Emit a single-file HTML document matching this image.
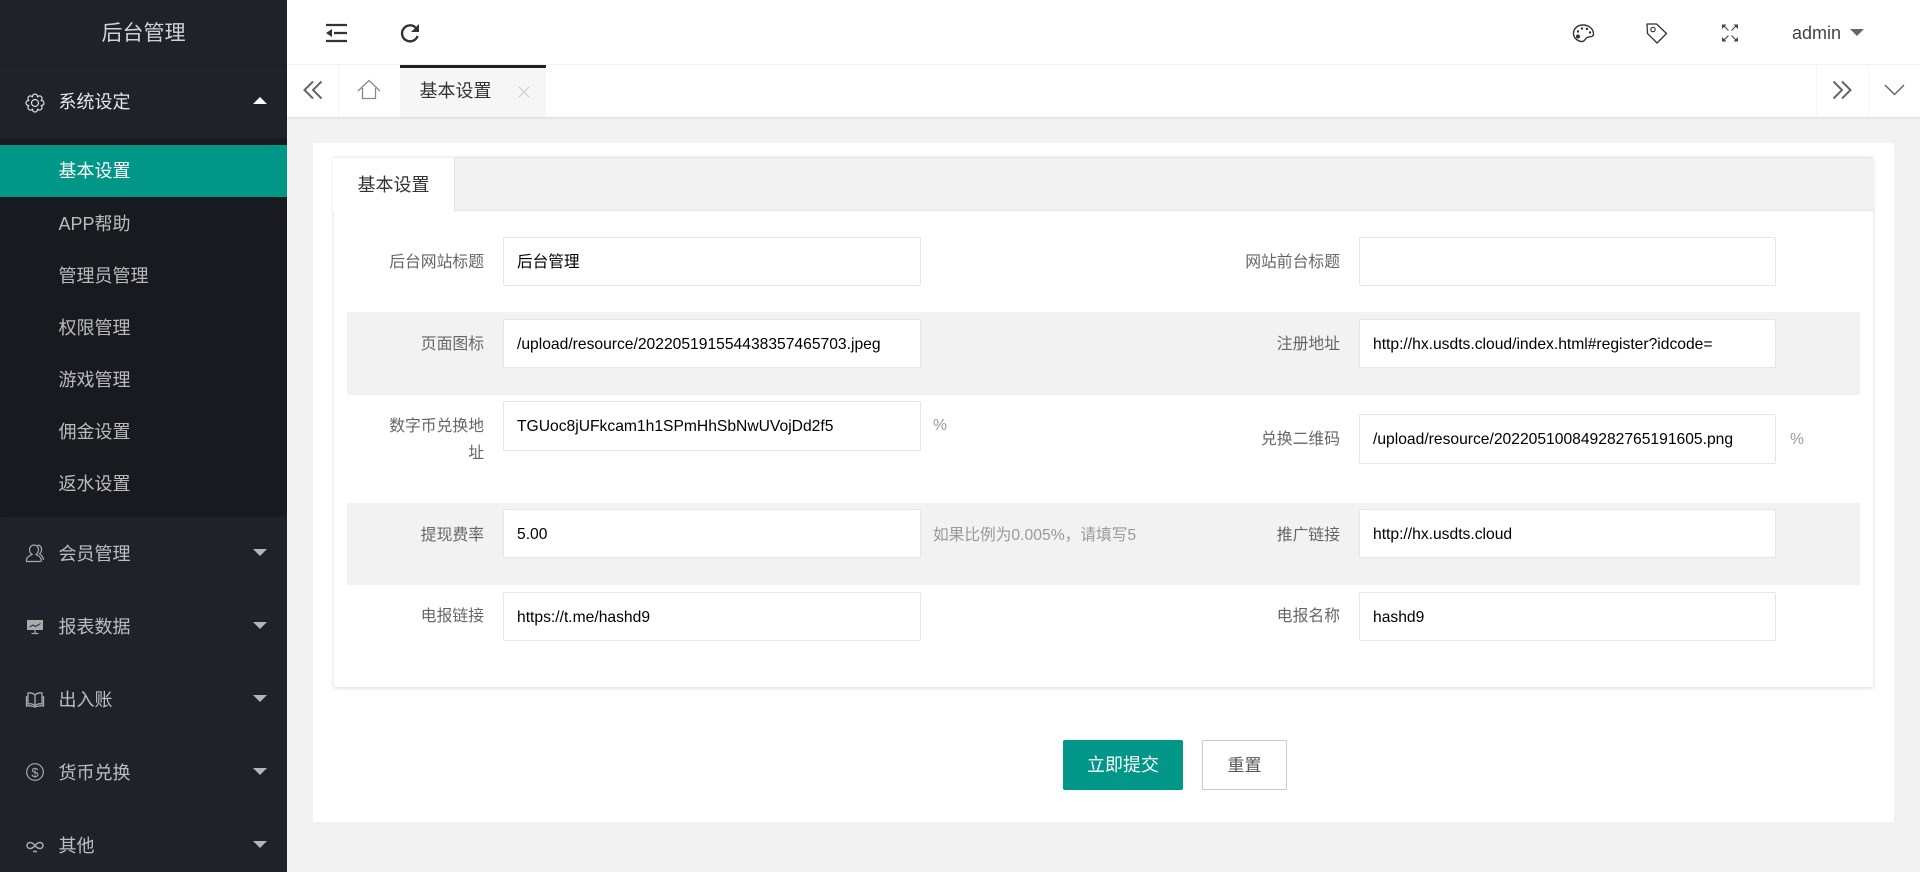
<!DOCTYPE html>
<html lang="zh-CN">
<head>
<meta charset="utf-8">
<title>后台管理</title>
<style>
*{box-sizing:border-box;margin:0;padding:0}
html,body{width:1920px;height:872px;overflow:hidden;background:#f2f2f2}
body{position:relative;font-family:"Liberation Sans","WenQuanYi Zen Hei","Noto Sans CJK SC",sans-serif;font-size:16px;color:#333}
.a{position:absolute;white-space:nowrap}
.side{position:absolute;left:0;top:0;width:287px;height:872px;background:#20222a;overflow:hidden}
.nav{position:absolute;left:58.5px;font-size:18px;line-height:30px;height:30px;color:rgba(255,255,255,.7);white-space:nowrap}
.lab{position:absolute;right:0;width:118px;text-align:right;font-size:15.8px;line-height:27px;color:#666}
.in{position:absolute;height:49px;line-height:49px;background:#fff;border:1px solid #e6e6e6;border-radius:2px;padding-left:13px;font-size:15.65px;color:#000;white-space:nowrap;overflow:hidden}
.band{position:absolute;left:347px;width:1513px;background:#f2f2f2}
.hint{position:absolute;font-size:15.7px;line-height:27px;color:#999;white-space:nowrap}
svg{position:absolute;left:0;top:0;overflow:visible}
</style>
</head>
<body>

<div class="side">
  <div class="a" style="left:0;top:0;width:287px;height:64px;line-height:67px;text-align:center;font-size:21px;color:rgba(255,255,255,.8);background:#20222a;box-shadow:0 1px 2px rgba(0,0,0,.1)">后台管理</div>
  <div class="nav" style="top:87px;color:#e8e8e9">系统设定</div>
  <div class="a" style="left:0;top:138px;width:287px;height:379px;background:#191a1f;border-radius:3px"></div>
  <div class="a" style="left:0;top:145px;width:287px;height:52px;background:#009688"></div>
  <div class="nav" style="top:156px;color:#fff">基本设置</div>
  <div class="nav" style="top:209px">APP帮助</div>
  <div class="nav" style="top:261px">管理员管理</div>
  <div class="nav" style="top:313px">权限管理</div>
  <div class="nav" style="top:365px">游戏管理</div>
  <div class="nav" style="top:417px">佣金设置</div>
  <div class="nav" style="top:469px">返水设置</div>
  <div class="nav" style="top:539px">会员管理</div>
  <div class="nav" style="top:612px">报表数据</div>
  <div class="nav" style="top:685px">出入账</div>
  <div class="nav" style="top:758px">货币兑换</div>
  <div class="nav" style="top:831px">其他</div>
</div>

<!-- header -->
<div class="a" style="left:287px;top:0;width:1633px;height:65px;background:#fff;border-bottom:1px solid #f6f6f6"></div>
<div class="a" style="left:1792px;top:18px;font-size:18px;line-height:30px;color:#444">admin</div>

<!-- tab bar -->
<div class="a" style="left:287px;top:65px;width:1633px;height:52px;background:#fff;box-shadow:0 1px 3px rgba(0,0,0,.1)"></div>
<div class="a" style="left:338px;top:65px;width:1px;height:52px;background:#f6f6f6"></div>
<div class="a" style="left:1816px;top:65px;width:1px;height:52px;background:#f6f6f6"></div>
<div class="a" style="left:1868px;top:65px;width:1px;height:52px;background:#f6f6f6"></div>
<div class="a" style="left:399.500px;top:65px;width:146px;height:52px;background:#f6f6f6;border-top:3px solid #20222a"></div>
<div class="a" style="left:419.500px;top:76px;font-size:18px;line-height:30px;color:#333">基本设置</div>

<!-- main card -->
<div class="a" style="left:313px;top:143px;width:1581px;height:679px;background:#fff;border-radius:2px"></div>
<div class="a" style="left:334px;top:157px;width:1539px;height:530px;background:#fff;border-radius:2px;box-shadow:0 1px 4px rgba(0,0,0,.16)"></div>
<div class="a" style="left:333px;top:157px;width:1540px;height:54px;background:#f2f2f2;border-bottom:1px solid #e6e6e6;border-top:1px solid #e6e6e6"></div>
<div class="a" style="left:333px;top:157px;width:122px;height:55px;background:#fff;border-right:1px solid #e6e6e6;border-top:1px solid #eee"></div>
<div class="a" style="left:357.500px;top:170px;font-size:18px;line-height:30px;color:#333">基本设置</div>

<div class="band" style="top:312px;height:83px"></div>
<div class="band" style="top:503px;height:82px"></div>

<!-- rows: left -->
<div class="lab" style="left:366px;top:248.500px">后台网站标题</div>
<div class="in" style="left:503px;top:237px;width:418px">后台管理</div>
<div class="lab" style="left:366px;top:330.500px">页面图标</div>
<div class="in" style="left:503px;top:319px;width:418px">/upload/resource/202205191554438357465703.jpeg</div>
<div class="lab" style="left:366px;top:412.500px;line-height:27px;white-space:normal;width:118px">数字币兑换地<br>址</div>
<div class="in" style="left:503px;top:401px;width:418px;height:50px">TGUoc8jUFkcam1h1SPmHhSbNwUVojDd2f5</div>
<div class="hint" style="left:933px;top:411.500px">%</div>
<div class="lab" style="left:366px;top:521.500px">提现费率</div>
<div class="in" style="left:503px;top:509px;width:418px;line-height:50px">5.00</div>
<div class="hint" style="left:933px;top:521.500px">如果比例为0.005%，请填写5</div>
<div class="lab" style="left:366px;top:603px">电报链接</div>
<div class="in" style="left:503px;top:592px;width:418px">https://t.me/hashd9</div>

<!-- rows: right -->
<div class="lab" style="left:1222px;top:248.500px;width:118px">网站前台标题</div>
<div class="in" style="left:1359px;top:237px;width:417px"></div>
<div class="lab" style="left:1222px;top:330.500px;width:118px">注册地址</div>
<div class="in" style="left:1359px;top:319px;width:417px">http://hx.usdts.cloud/index.html#register?idcode=</div>
<div class="lab" style="left:1222px;top:425.500px;width:118px">兑换二维码</div>
<div class="in" style="left:1359px;top:414px;width:417px;height:50px">/upload/resource/202205100849282765191605.png</div>
<div class="hint" style="left:1790px;top:425.500px">%</div>
<div class="lab" style="left:1222px;top:521.500px;width:118px">推广链接</div>
<div class="in" style="left:1359px;top:509px;width:417px;line-height:50px">http://hx.usdts.cloud</div>
<div class="lab" style="left:1222px;top:603px;width:118px">电报名称</div>
<div class="in" style="left:1359px;top:592px;width:417px">hashd9</div>

<!-- buttons -->
<div class="a" style="left:1063px;top:740px;width:120px;height:50px;background:#009688;border-radius:2px;color:#fff;font-size:18px;line-height:50px;text-align:center">立即提交</div>
<div class="a" style="left:1202px;top:740px;width:85px;height:50px;background:#fff;border:1px solid #c9c9c9;border-radius:2px;color:#555;font-size:17px;line-height:50px;text-align:center">重置</div>

<!-- icons -->
<svg width="1920" height="872" viewBox="0 0 1920 872" fill="none">
  <!-- fold -->
  <path d="M326 25h21M334 33h13M326 41h21" stroke="#333" stroke-width="2.200"/>
  <path d="M326 33l6-4v8z" fill="#333"/>
  <!-- refresh -->
  <path d="M415.500 27.500A8 8 0 1 0 417.600 36" stroke="#333" stroke-width="2.400"/>
  <path d="M419 24v8h-8z" fill="#333"/>
  <!-- palette -->
  <path d="M1583 25C1577 25 1573.500 29 1573.500 33.500C1573.500 38 1578 41.500 1582 41.500C1585 41.500 1585 38.500 1587 37.500C1589 36.500 1593.500 37.500 1593.500 34C1593.500 29 1589 25 1583 25Z" stroke="#333" stroke-width="1.400"/>
  <circle cx="1578" cy="36.500" r="2" fill="#333"/><circle cx="1578" cy="31.500" r="1.200" fill="#333"/><circle cx="1582" cy="28.500" r="1.200" fill="#333"/><circle cx="1587" cy="29" r="1.200" fill="#333"/><circle cx="1590" cy="32.500" r="1.200" fill="#333"/>
  <!-- tag -->
  <path d="M1647 24h9.500L1666.500 33.500 1657 43 1647.500 33.500Z" stroke="#333" stroke-width="1.300" stroke-linejoin="round"/>
  <circle cx="1653" cy="29.500" r="2.200" stroke="#333" stroke-width="1.100"/>
  <!-- fullscreen -->
  <path d="M1723.500 25.500l5 5M1736.500 25.500l-5 5M1723.500 40.500l5-5M1736.500 40.500l-5-5" stroke="#444" stroke-width="1.100"/>
  <path d="M1722 24.500h4.500L1722 29zM1738 24.500h-4.500L1738 29zM1722 41.500h4.500L1722 37zM1738 41.500h-4.500L1738 37z" fill="#444"/>
  <!-- caret admin -->
  <path d="M1850 29h14l-7 7z" fill="#666"/>
  <!-- tab bar icons -->
  <path d="M313 81.500L304.500 90 313 98.500M321.500 81.500L313 90 321.500 98.500" stroke="#666" stroke-width="2"/>
  <path d="M1842 81.500L1850.500 90 1842 98.500M1833.500 81.500L1842 90 1833.500 98.500" stroke="#666" stroke-width="2"/>
  <path d="M1885 85L1894.500 94.500 1904 85" stroke="#666" stroke-width="1.500"/>
  <path d="M358 91L369 80.500 380 91" stroke="#888" stroke-width="1.300"/>
  <path d="M362.500 88V98.500H375.500V88" stroke="#888" stroke-width="1.300"/>
  <path d="M519 87L529 97M529 87L519 97" stroke="#ccc" stroke-width="1.200"/>
  <!-- gear -->
  <path d="M40.730 105.370A2.500 2.500 0 1 1 37.370 108.730A2.500 2.500 0 1 1 32.630 108.730A2.500 2.500 0 1 1 29.270 105.370A2.500 2.500 0 1 1 29.270 100.630A2.500 2.500 0 1 1 32.630 97.270A2.500 2.500 0 1 1 37.370 97.270A2.500 2.500 0 1 1 40.730 100.630A2.500 2.500 0 1 1 40.730 105.370Z" stroke="#ddd" stroke-width="1.200"/>
  <circle cx="35" cy="103" r="3.500" stroke="#ddd" stroke-width="1.200"/>
  <!-- carets -->
  <path d="M253 104h14l-7-7z" fill="#fff"/>
  <g fill="#b5b6b8">
    <path d="M253 549h14l-7 7z"/><path d="M253 622h14l-7 7z"/><path d="M253 695h14l-7 7z"/><path d="M253 768h14l-7 7z"/><path d="M253 841h14l-7 7z"/>
  </g>
  <!-- user -->
  <g stroke="#aaa" stroke-width="1.200">
    <path d="M26.500 561.500h13.500c1.500 0 1.500-1 1.300-2-.6-2.800-3.500-4-5.300-5 2-1.500 2.500-3.500 2.500-5 0-2.500-2-4.500-4.500-4.500s-4.500 2-4.500 4.500c0 1.500.5 3.500 2.500 5-2 1-5 2.200-5.500 5z"/>
    <path d="M37.500 545c3 .3 4.500 2.500 4 5.500-.3 1.800-1.500 3-2 3.500 2 1 3.800 3 4 6"/>
  </g>
  <!-- report -->
  <path d="M27 620h16v10H27z" fill="#aaa"/>
  <path d="M35 630v3.500M31.500 633.500h7" stroke="#aaa" stroke-width="1.200"/>
  <path d="M29.500 627l3.500-2 2.500 1.500 5-3" stroke="#20222a" stroke-width="1"/>
  <!-- book -->
  <g stroke="#aaa" stroke-width="1.300">
    <path d="M35 695c-2-2-5-2.500-7-2v11c2-.5 5 0 7 1.500 2-1.500 5-2 7-1.500v-11c-2-.5-5 0-7 2zM35 695v10.500"/>
    <path d="M26.500 696v10c3-.5 6 0 8.500 1 2.500-1 5.500-1.500 8.500-1v-10"/>
  </g>
  <!-- dollar -->
  <circle cx="35" cy="772" r="8.300" stroke="#aaa" stroke-width="1.200"/>
  <text x="35" y="777" font-family="Liberation Sans" font-size="13" fill="#aaa" text-anchor="middle">$</text>
  <!-- infinity -->
  <path d="M35 845.500c-2-2.500-3.500-3-5-3a3 3 0 0 0 0 6c1.500 0 3-.5 5-3 2-2.500 3.500-3 5-3a3 3 0 0 1 0 6c-1.500 0-3-.5-5-3z" stroke="#aaa" stroke-width="1.500"/>
  <path d="M33 851.500h4" stroke="#aaa" stroke-width="1.500"/>
</svg>
</body>
</html>
